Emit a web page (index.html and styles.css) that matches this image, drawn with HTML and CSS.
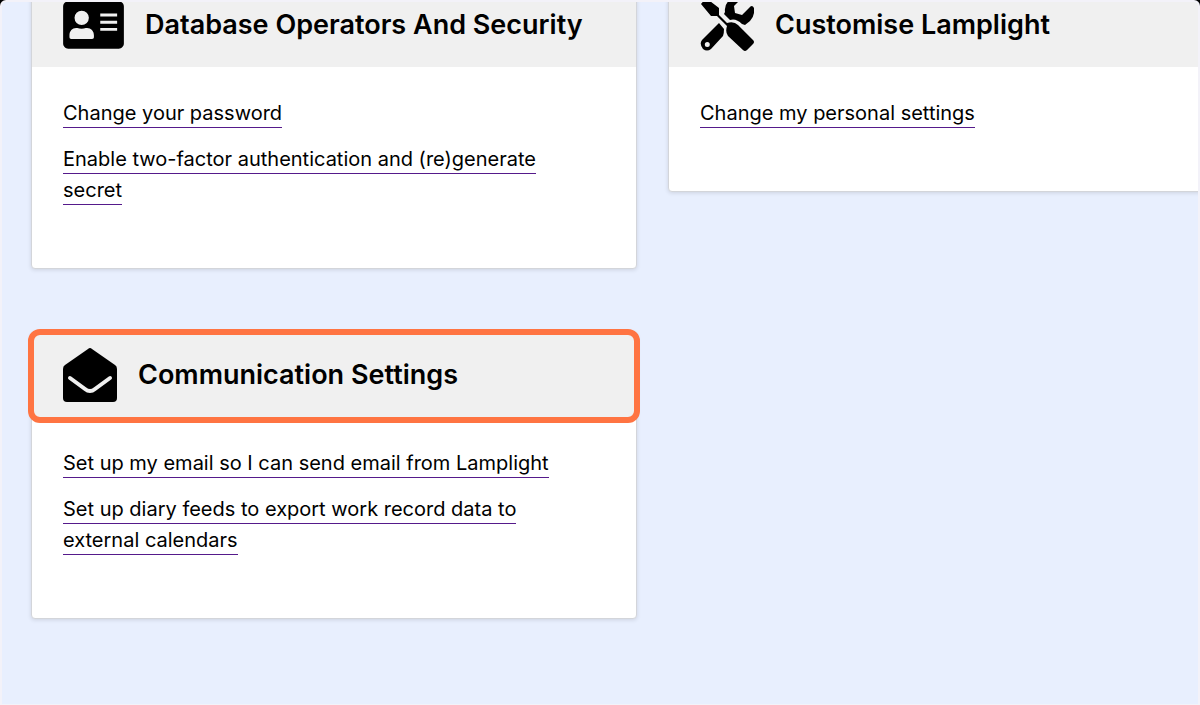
FILE: index.html
```html
<!DOCTYPE html>
<html lang="en">
<head>
<meta charset="utf-8">
<title>Lamplight settings</title>
<link rel="stylesheet" href="styles.css">
</head>
<body>
<main class="frame">
  <div class="cards">
    <section class="card">
      <header class="card-header">
        <svg class="icon icon-wide" viewBox="0 0 576 512" aria-hidden="true"><path fill-rule="evenodd" d="M528 32H48C21.500 32 0 53.500 0 80v352c0 26.500 21.500 48 48 48h480c26.500 0 48-21.500 48-48V80c0-26.500-21.500-48-48-48zM176 120a68 68 0 1 1 0 136a68 68 0 1 1 0-136zM292 370c0 11-6 18-18 18H78c-12 0-18-7-18-18v-18c0-38 26-68 63-68h12c12 5 26 8 40 8s28-3 40-8h12c37 0 65 30 65 68zM352 284h160v27H352zM352 216h160v27H352zM352 148h160v27H352z"/></svg>
        <h2 class="card-title">Database Operators And Security</h2>
      </header>
      <ul class="links">
        <li><a class="link" href="#password">Change your password</a></li>
        <li><a class="link" href="#two-factor">Enable two-factor authentication and (re)generate secret</a></li>
      </ul>
    </section>
    <section class="card">
      <header class="card-header">
        <svg class="icon" viewBox="0 0 54 54" aria-hidden="true">
          <path d="M1 6L6 0L19 10V17L27 25Q34 23 38 27L53 42Q55 44 53 46L47 52Q45 54 43 52L28 38Q25 34 27 28L17 18H11Z"/>
          <path d="M25 14Q24 6 30 2Q35-1 41 1L34 8L35 15L42 17L49 10Q52 6 54 10Q55 18 50 23L45 27L42 26Q36 20 30 22L24 16Z"/>
          <path fill-rule="evenodd" d="M19 25L24 31Q24 36 23 38L11 51Q7 54 3 51Q-1 46 2 42ZM7.300 44a2.500 2.500 0 1 0 0 5a2.500 2.500 0 1 0 0-5z"/>
        </svg>
        <h2 class="card-title">Customise Lamplight</h2>
      </header>
      <ul class="links">
        <li><a class="link" href="#personal">Change my personal settings</a></li>
      </ul>
    </section>
    <section class="card">
      <header class="card-header card-header-active">
        <svg class="icon" viewBox="0 0 54 54" aria-hidden="true"><path d="M0 21Q0 18 2 17L25 1Q27-1 29 1L52 17Q54 18 54 21V50Q54 54 50 54H4Q0 54 0 50Z"/><path class="flap" d="M7 30L22 41Q27 45 32 41L47 30"/></svg>
        <h2 class="card-title">Communication Settings</h2>
      </header>
      <ul class="links">
        <li><a class="link" href="#email">Set up my email so I can send email from Lamplight</a></li>
        <li><a class="link" href="#diary">Set up diary feeds to export work record data to external calendars</a></li>
      </ul>
    </section>
  </div>
</main>
</body>
</html>
```
FILE: styles.css
```css
* { box-sizing: border-box; }
body {
  margin: 0;
  background: #000;
  color: #000;
  font-family: Inter, "Liberation Sans", sans-serif;
}
.frame {
  min-height: 100vh;
  padding: 0 0 62px 29px;
  overflow: hidden;
  background: #e8effe;
  border: 2px solid #f3f2f9;
  border-bottom-width: 1px;
  border-radius: 6px 6px 0 0;
}
.cards {
  display: grid;
  grid-template-columns: 1fr 1fr;
  align-items: start;
  gap: 63px 31px;
  margin: -20px -76px 0 0;
}
.card {
  background: #fff;
  border: 1px solid #d3d5da;
  border-radius: 4px;
  box-shadow: 0 1px 4px rgba(0, 0, 0, 0.12);
}
.card-header {
  position: relative;
  display: flex;
  align-items: center;
  gap: 21px;
  padding: 15px 31px;
  background: #f0f0f0;
}
.card-header-active::after {
  content: "";
  position: absolute;
  inset: -4px -4px -6px;
  border: 6px solid #ff7442;
  border-radius: 12px;
}
.icon {
  flex: none;
  width: 54px;
  height: 54px;
}
.icon-wide { width: 61px; }
.flap {
  fill: none;
  stroke: #f0f0f0;
  stroke-width: 4;
  stroke-linecap: round;
}
.card-title {
  margin: 0;
  font-size: 27px;
  font-weight: 600;
  line-height: 32px;
}
.links {
  display: grid;
  gap: 15px;
  margin: 0;
  padding: 31px 76px 62px 31px;
  list-style: none;
  font-size: 20px;
  line-height: 31px;
}
.link {
  color: #000;
  text-decoration: none;
  padding-bottom: 2px;
  border-bottom: 1px solid #551a8b;
}
```
